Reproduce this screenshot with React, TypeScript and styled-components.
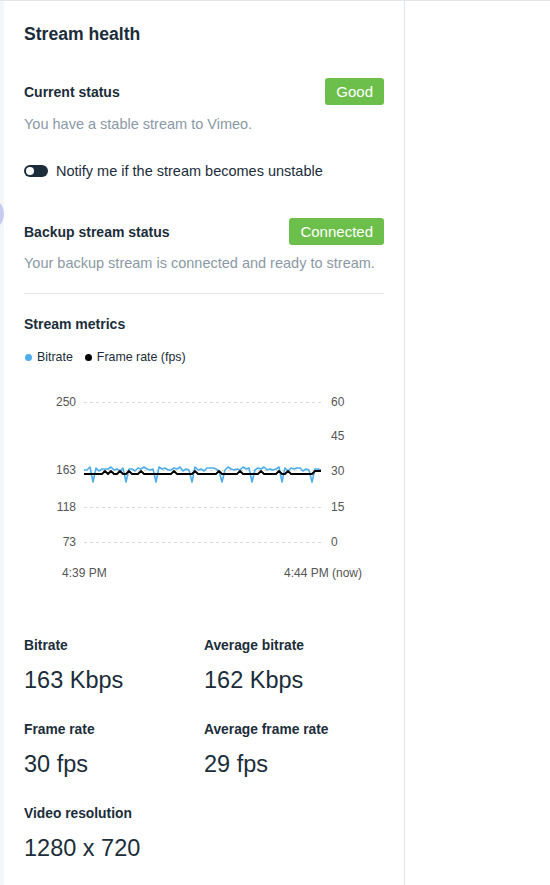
import React from 'react';
import styled, { createGlobalStyle } from 'styled-components';

const GlobalStyle = createGlobalStyle`
  html, body {
    margin: 0;
    padding: 0;
    background: #fff;
  }
  body {
    font-family: "Liberation Sans", Arial, Helvetica, sans-serif;
    color: #1b2d3a;
    -webkit-font-smoothing: antialiased;
  }
`;

const Page = styled.div`
  display: flex;
  min-height: 885px;
  box-sizing: border-box;
  border-top: 1px solid #e3e6e9;
`;

const Gutter = styled.div`
  position: relative;
  width: 4px;
  flex-shrink: 0;
  background: #f4f6f8;
  overflow: hidden;
`;

const GutterHandle = styled.span`
  position: absolute;
  left: -30px;
  top: 196px;
  width: 34px;
  height: 34px;
  border-radius: 50%;
  background: #c6cbf1;
`;

const Panel = styled.section`
  width: 401px;
  flex-shrink: 0;
  box-sizing: border-box;
  padding: 23px 20px 40px;
  border-right: 1px solid #e3e6e9;
  background: #fff;
`;

const Title = styled.h2`
  margin: 0;
  font-size: 17.6px;
  line-height: 20px;
  font-weight: 700;
`;

const StatusRow = styled.div<{ $gap: number }>`
  display: flex;
  align-items: center;
  justify-content: space-between;
  height: 27px;
  margin-top: ${p => p.$gap}px;
`;

const Label = styled.span`
  font-size: 14px;
  font-weight: 700;
  line-height: 20px;
`;

const Badge = styled.span`
  display: inline-block;
  height: 27px;
  line-height: 27px;
  padding: 0 11px;
  border-radius: 3px;
  background: #6dbf4b;
  color: #fff;
  font-size: 15px;
`;

const Description = styled.p<{ $gap: number }>`
  margin: ${p => p.$gap}px 0 0;
  font-size: 14.5px;
  line-height: 20px;
  color: #8a99a5;
`;

const ToggleRow = styled.label`
  display: flex;
  align-items: center;
  gap: 8px;
  margin-top: 27px;
  height: 20px;
  font-size: 14.5px;
`;

const Switch = styled.span`
  position: relative;
  width: 24px;
  height: 12px;
  border-radius: 6px;
  background: #1b2d3a;
  flex-shrink: 0;

  &::after {
    content: '';
    position: absolute;
    left: 2px;
    top: 2px;
    width: 8px;
    height: 8px;
    border-radius: 50%;
    background: #fff;
  }
`;

const Divider = styled.hr`
  margin: 20px 0 0;
  border: 0;
  height: 1px;
  background: #e3e6e9;
`;

const SectionTitle = styled.h3`
  margin: 20px 0 0;
  font-size: 14px;
  line-height: 20px;
  font-weight: 700;
`;

const Legend = styled.div`
  display: flex;
  align-items: center;
  gap: 11px;
  margin-top: 15px;
  height: 16px;
  font-size: 12.4px;
`;

const LegendItem = styled.span`
  display: inline-flex;
  align-items: center;
  gap: 5px;
`;

const Dot = styled.span<{ $color: string }>`
  width: 7px;
  height: 7px;
  margin-left: 1px;
  border-radius: 50%;
  background: ${p => p.$color};
`;

const Chart = styled.svg`
  display: block;
  margin-top: 25px;
  overflow: visible;
`;

const MetricsGrid = styled.div`
  display: grid;
  grid-template-columns: 180px 180px;
  row-gap: 27px;
  margin-top: 52px;
`;

const MetricLabel = styled.div`
  font-size: 13.8px;
  line-height: 18px;
  font-weight: 700;
`;

const MetricValue = styled.div`
  margin-top: 11px;
  font-size: 23.5px;
  line-height: 28px;
`;

const BLUE = '#4dadea';

// chart geometry (svg coords, origin at panel content left / chart top)
const X0 = 60;
const X1 = 298;
const dips = [8, 41, 73, 109, 139, 167, 199, 228];
const frameBumps = [20, 28, 35, 44, 58, 90, 112, 136, 155, 178, 195, 205, 232];

function bitratePath() {
  const pts: string[] = [];
  for (let x = X0; x <= X1; x += 3) {
    const i = x - X0;
    let y = 79 + Math.round(Math.sin(i * 0.9) * 1.2 + Math.cos(i * 0.37) * 1.1);
    if (dips.some(d => Math.abs(d - i) < 2)) y = 92;
    pts.push(`${x},${y}`);
  }
  return 'M' + pts.join(' L');
}

function framePath() {
  const pts: string[] = [];
  for (let x = X0; x <= X1; x += 3) {
    const i = x - X0;
    let y = 84;
    if (frameBumps.some(b => Math.abs(b - i) < 2)) y = 81;
    if (i >= X1 - X0 - 5) y = 81;
    pts.push(`${x},${y}`);
  }
  return 'M' + pts.join(' L');
}

const leftTicks = [
  { v: '250', y: 12 },
  { v: '163', y: 80 },
  { v: '118', y: 117 },
  { v: '73', y: 152 },
];
const rightTicks = [
  { v: '60', y: 12 },
  { v: '45', y: 46 },
  { v: '30', y: 81 },
  { v: '15', y: 117 },
  { v: '0', y: 152 },
];

function MetricsChart() {
  return (
    <Chart width={360} height={195} viewBox="0 0 360 195" fontSize={12} fill="#555">
      {leftTicks.map(t => (
        <g key={t.v}>
          <text x={52} y={t.y} textAnchor="end" dominantBaseline="central">{t.v}</text>
          <line x1={X0} x2={X1} y1={t.y + 0.5} y2={t.y + 0.5} stroke="#d8dbde" strokeDasharray="3 3" />
        </g>
      ))}
      {rightTicks.map(t => (
        <text key={t.v} x={307} y={t.y} dominantBaseline="central">{t.v}</text>
      ))}
      <path d={bitratePath()} fill="none" stroke={BLUE} strokeWidth={1.6} strokeLinejoin="round" />
      <path d={framePath()} fill="none" stroke="#000" strokeWidth={1.8} strokeLinejoin="round" />
      <text x={38} y={183} dominantBaseline="central">4:39 PM</text>
      <text x={338} y={183} textAnchor="end" dominantBaseline="central">4:44 PM (now)</text>
    </Chart>
  );
}

const metrics = [
  { label: 'Bitrate', value: '163 Kbps' },
  { label: 'Average bitrate', value: '162 Kbps' },
  { label: 'Frame rate', value: '30 fps' },
  { label: 'Average frame rate', value: '29 fps' },
  { label: 'Video resolution', value: '1280 x 720' },
];

export default function App() {
  return (
    <>
      <GlobalStyle />
      <Page>
        <Gutter>
          <GutterHandle />
        </Gutter>
        <Panel>
          <Title>Stream health</Title>

          <StatusRow $gap={34}>
            <Label>Current status</Label>
            <Badge>Good</Badge>
          </StatusRow>
          <Description $gap={9}>You have a stable stream to Vimeo.</Description>

          <ToggleRow>
            <Switch />
            Notify me if the stream becomes unstable
          </ToggleRow>

          <StatusRow $gap={37}>
            <Label>Backup stream status</Label>
            <Badge>Connected</Badge>
          </StatusRow>
          <Description $gap={8}>Your backup stream is connected and ready to stream.</Description>

          <Divider />

          <SectionTitle>Stream metrics</SectionTitle>
          <Legend>
            <LegendItem><Dot $color={BLUE} />Bitrate</LegendItem>
            <LegendItem><Dot $color="#000" />Frame rate (fps)</LegendItem>
          </Legend>

          <MetricsChart />

          <MetricsGrid>
            {metrics.map(m => (
              <div key={m.label}>
                <MetricLabel>{m.label}</MetricLabel>
                <MetricValue>{m.value}</MetricValue>
              </div>
            ))}
          </MetricsGrid>
        </Panel>
      </Page>
    </>
  );
}
